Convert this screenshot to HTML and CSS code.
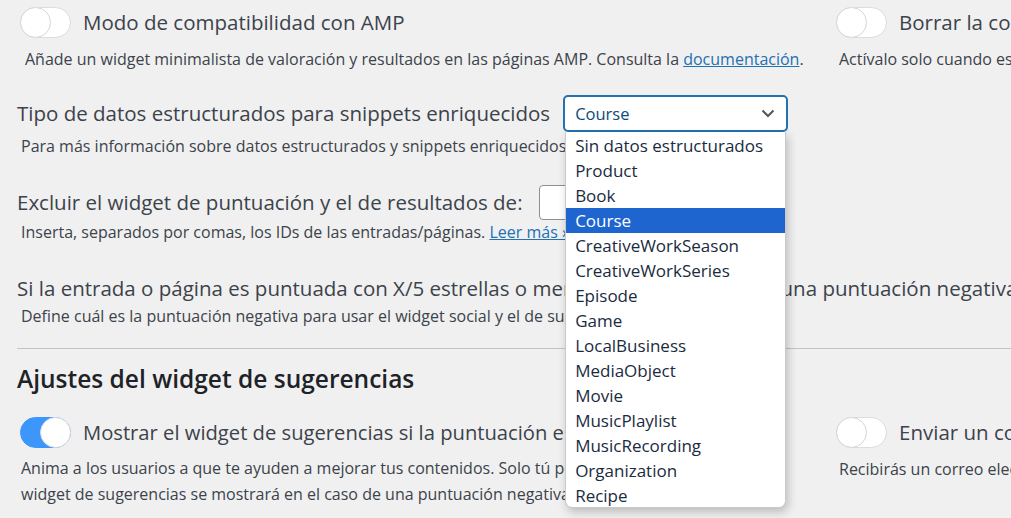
FILE: index.html
```html
<!DOCTYPE html>
<html lang="es">
<head>
<meta charset="utf-8">
<title>Ajustes</title>
<link rel="stylesheet" href="styles.css">
</head>
<body>
<div class="page">
  <div class="row2 row-amp">
    <div class="col">
      <div class="toggle-line">
        <span class="toggle"><span class="knob"></span></span>
        <span class="label">Modo de compatibilidad con AMP</span>
      </div>
      <p class="desc desc-amp">Añade un widget minimalista de valoración y resultados en las páginas AMP. Consulta la <a href="#">documentación</a>.</p>
    </div>
    <div class="col col-right">
      <div class="toggle-line">
        <span class="toggle"><span class="knob"></span></span>
        <span class="label">Borrar la configuración al desinstalar</span>
      </div>
      <p class="desc desc-right">Actívalo solo cuando estés seguro de querer borrar todos los datos.</p>
    </div>
  </div>

  <div class="field field-schema">
    <div class="field-line">
      <span class="label">Tipo de datos estructurados para snippets enriquecidos</span>
      <div class="select-wrap">
        <div class="select">
          <span class="select-value">Course</span>
          <svg class="chevron" width="14" height="9" viewBox="0 0 14 9"><path d="M1.5 1.5 L7 7 L12.5 1.5" fill="none" stroke="#50575e" stroke-width="2"/></svg>
        </div>
        <ul class="dropdown">
          <li>Sin datos estructurados</li>
          <li>Product</li>
          <li>Book</li>
          <li class="selected">Course</li>
          <li>CreativeWorkSeason</li>
          <li>CreativeWorkSeries</li>
          <li>Episode</li>
          <li>Game</li>
          <li>LocalBusiness</li>
          <li>MediaObject</li>
          <li>Movie</li>
          <li>MusicPlaylist</li>
          <li>MusicRecording</li>
          <li>Organization</li>
          <li>Recipe</li>
        </ul>
      </div>
    </div>
    <p class="desc desc-tight">Para más información sobre datos estructurados y snippets enriquecidos, lee esto.</p>
  </div>

  <div class="field field-exclude">
    <div class="field-line">
      <span class="label">Excluir el widget de puntuación y el de resultados de:</span>
      <span class="input"></span>
    </div>
    <p class="desc desc-flush">Inserta, separados por comas, los IDs de las entradas/páginas. <a href="#">Leer más »</a></p>
  </div>

  <div class="field field-negative">
    <div class="label label-line">Si la entrada o página es puntuada con X/5 estrellas o menos, se la consideraría una puntuación negativa</div>
    <p class="desc desc-flush">Define cuál es la puntuación negativa para usar el widget social y el de sugerencias.</p>
  </div>

  <hr class="sep">

  <h2 class="heading">Ajustes del widget de sugerencias</h2>

  <div class="row2 row-feedback">
    <div class="col">
      <div class="toggle-line">
        <span class="toggle on"><span class="knob"></span></span>
        <span class="label label-feedback">Mostrar el widget de sugerencias si la puntuación es negativa</span>
      </div>
      <p class="desc desc-multi">Anima a los usuarios a que te ayuden a mejorar tus contenidos. Solo tú podrás verlas. El<br>widget de sugerencias se mostrará en el caso de una puntuación negativa.</p>
    </div>
    <div class="col col-right">
      <div class="toggle-line">
        <span class="toggle"><span class="knob"></span></span>
        <span class="label">Enviar un correo electrónico</span>
      </div>
      <p class="desc desc-right">Recibirás un correo electrónico con cada sugerencia.</p>
    </div>
  </div>
</div>
</body>
</html>
```

FILE: styles.css
```css
html, body {
  margin: 0;
  padding: 0;
  background: #f0f0f1;
  overflow: hidden;
}

body {
  width: 1011px;
  height: 518px;
  font-family: "Open Sans", "Noto Sans", sans-serif;
  color: #3c434a;
}

.page {
  padding: 7px 0 0 17px;
  white-space: nowrap;
}

.row2 {
  display: grid;
  grid-template-columns: 816px 400px;
}

.col {
  min-width: 0;
}

.toggle-line {
  display: flex;
  align-items: center;
  gap: 12px;
  height: 31px;
}

.toggle {
  position: relative;
  box-sizing: border-box;
  width: 51px;
  height: 31px;
  margin-left: 3px;
  border-radius: 16px;
  border: 1px solid #dcdcde;
  background: #fff;
  flex: none;
}

.toggle .knob {
  position: absolute;
  top: -1px;
  left: -1px;
  box-sizing: border-box;
  width: 31px;
  height: 31px;
  border-radius: 50%;
  border: 1px solid #d5d5d7;
  background: #fff;
}

.toggle.on {
  background: #3d96fb;
  border-color: #3d96fb;
}

.toggle.on .knob {
  left: auto;
  right: -1px;
  border-color: #dcdcde;
}

.label {
  font-size: 20.5px;
  line-height: 31px;
  color: #3c434a;
}

.label-feedback {
  font-size: 20.2px;
}

.desc {
  margin: 0;
  font-size: 16px;
  line-height: 24px;
  padding-left: 4px;
  color: #3c434a;
}

.desc a {
  color: #2271b1;
  text-decoration: underline;
}

.desc-amp {
  margin-top: 9px;
  padding-left: 8px;
}

.desc-right {
  margin-top: 9px;
  padding-left: 6px;
}

.field-schema {
  margin-top: 24px;
}

.field-line {
  display: flex;
  align-items: center;
  gap: 13px;
}

.select-wrap {
  position: relative;
}

.select {
  box-sizing: border-box;
  width: 225px;
  height: 37px;
  border: 2px solid #2271b1;
  border-radius: 5px;
  background: #fff;
  display: flex;
  align-items: center;
  justify-content: space-between;
  padding: 0 11px 0 10px;
}

.select-value {
  font-size: 16.5px;
  color: #0a4b78;
}

.chevron {
  display: block;
}

.dropdown {
  position: absolute;
  top: 37px;
  left: 2px;
  z-index: 5;
  width: 221px;
  margin: 0;
  padding: 1px 0 0;
  list-style: none;
  background: #fff;
  border: 1px solid #c9c9c9;
  border-top: none;
  border-radius: 0 0 7px 7px;
  box-shadow: 2px 4px 10px rgba(0, 0, 0, 0.22);
  box-sizing: border-box;
  height: 376px;
  overflow: hidden;
}

.dropdown li {
  height: 25px;
  line-height: 25px;
  padding-left: 9px;
  font-size: 17px;
  color: #1a2b40;
}

.dropdown li.selected {
  background: #1f65cf;
  color: #fff;
}

.desc-tight {
  margin-top: 2px;
}

.field-exclude {
  margin-top: 27px;
}

.input {
  box-sizing: border-box;
  width: 220px;
  height: 35px;
  border: 1px solid #8c8f94;
  border-radius: 4px;
  background: #fff;
  margin-left: 3px;
}

.desc-flush {
  margin-top: 0;
}

.field-negative {
  margin-top: 29px;
}

.label-line {
  display: block;
}

.sep {
  margin: 20px 0 0;
  border: 0;
  border-top: 1px solid #c3c4c7;
  height: 0;
}

.heading {
  margin: 14px 0 0;
  font-size: 24.5px;
  line-height: 32px;
  font-weight: 600;
  color: #1d2327;
}

.row-feedback {
  margin-top: 22px;
}

.desc-multi {
  margin-top: 7px;
  line-height: 26px;
}
```
